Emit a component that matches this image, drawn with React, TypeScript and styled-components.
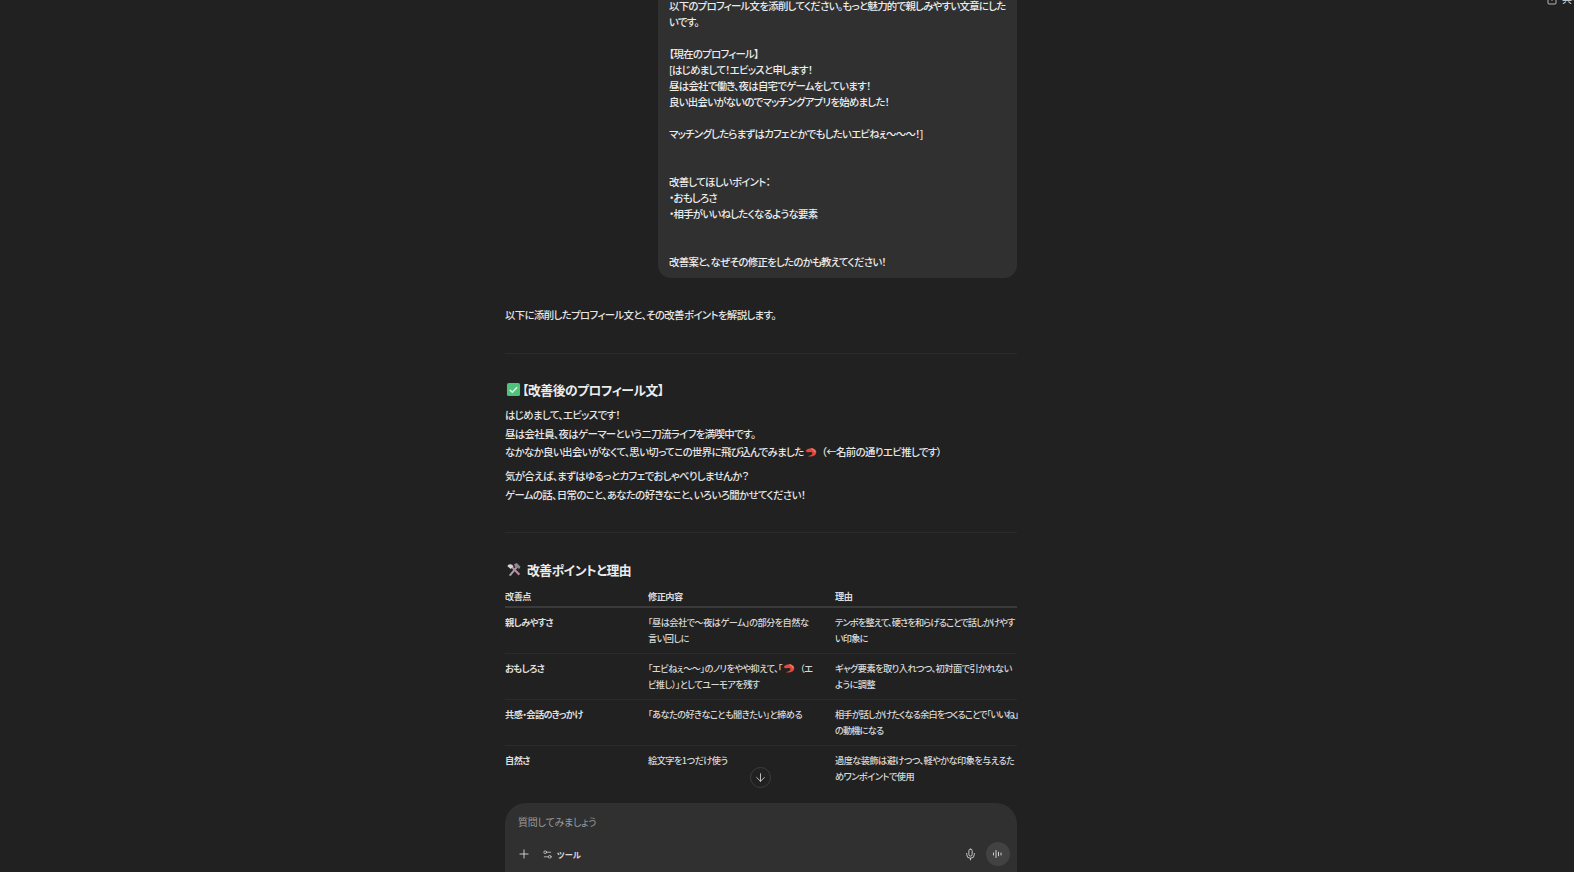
import * as React from 'react';
import styled, { createGlobalStyle } from 'styled-components';
import { ArrowDown, Mic, Plus, Settings2, Share } from 'lucide-react';

const fontStack = '"Noto Sans CJK JP", "Noto Sans", sans-serif';

const bubbleLines = [
  '以下のプロフィール文を添削してください。もっと魅力的で親しみやすい文章にした',
  'いです。',
  '',
  '【現在のプロフィール】',
  '[はじめまして！エビッスと申します！',
  '昼は会社で働き、夜は自宅でゲームをしています！',
  '良い出会いがないのでマッチングアプリを始めました！',
  '',
  'マッチングしたらまずはカフェとかでもしたいエビねぇ〜〜〜！]',
  '',
  '',
  '改善してほしいポイント：',
  '・おもしろさ',
  '・相手がいいねしたくなるような要素',
  '',
  '',
  '改善案と、なぜその修正をしたのかも教えてください！',
];

const Shrimp = () => (
  <ShrimpSvg viewBox="0 0 16 16">
    <path d="M1 6.500C3 2.500 10 1.800 13.500 4.500c2.500 2 2 6.500-1.200 8.300-2.500 1.400-6 1.500-8.300.7 2-1 5-1.200 5.800-3.200C10.500 8.500 8 7.800 5.500 8.300 3.700 8.600 2 8 1 6.500z" fill="#e2483d" />
    <path d="M8.500 3.800c2.800.2 4.800 2 4.800 4.600" fill="none" stroke="#f59a7c" strokeWidth="1.200" />
  </ShrimpSvg>
);

const CheckEmoji = () => (
  <EmojiSvg viewBox="0 0 16 16">
    <rect x="1" y="1" width="14" height="14" rx="2" fill="#4fc27c" />
    <path d="M4 8.200l2.700 2.700L12 5.600" fill="none" stroke="#dff5e6" strokeWidth="1.600" />
  </EmojiSvg>
);

const ToolsEmoji = () => (
  <EmojiSvg viewBox="0 0 16 16">
    <path d="M3 14L10.500 5l1.500 1.500L5 15z" fill="#a9a4ad" />
    <path d="M8.500 2.500l3-1.500 4 4-1.500 2.500-2-1.500-2 .5z" fill="#8d8791" />
    <path d="M13.500 14.500L5.500 6 7 4.500l8 8z" fill="#b98aa2" />
    <path d="M1.500 4.500C2 2.500 4.500 1.500 6.500 3L8 4.500 5 7.500 3.500 6z" fill="#d5d2d8" />
  </EmojiSvg>
);

const VoiceBars = () => (
  <svg width="12" height="12" viewBox="0 0 12 12" fill="none" stroke="currentColor" strokeWidth="1" strokeLinecap="round">
    <path d="M1.500 5v2M4 2.500v7M6.500 4.200v3.600M9 5v2" />
  </svg>
);

export default function App() {
  return (
    <Page>
      <GlobalStyle />
      <ShareAction>
        <Share size={12} strokeWidth={1.6} />
        <span>共有</span>
      </ShareAction>
      <Scroller>
        <Thread>
          <UserBubble>
            {bubbleLines.map((line, i) => (
              <BubbleLine key={i}>{line}</BubbleLine>
            ))}
          </UserBubble>
          <Intro>以下に添削したプロフィール文と、その改善ポイントを解説します。</Intro>
          <Rule />
          <Heading>
            <CheckEmoji />
            <BracketTitle>【改善後のプロフィール文】</BracketTitle>
          </Heading>
          <Paragraph>
            はじめまして、エビッスです！
            <br />
            昼は会社員、夜はゲーマーという二刀流ライフを満喫中です。
            <br />
            なかなか良い出会いがなくて、思い切ってこの世界に飛び込んでみました
            <Shrimp />
            （←名前の通りエビ推しです）
          </Paragraph>
          <Paragraph>
            気が合えば、まずはゆるっとカフェでおしゃべりしませんか？
            <br />
            ゲームの話、日常のこと、あなたの好きなこと、いろいろ聞かせてください！
          </Paragraph>
          <Rule $second />
          <Heading $second>
            <ToolsEmoji />
            <PlainTitle>改善ポイントと理由</PlainTitle>
          </Heading>
          <PointsTable>
            <colgroup>
              <FirstCol />
              <SecondCol />
              <col />
            </colgroup>
            <thead>
              <tr>
                <HeadCell>改善点</HeadCell>
                <HeadCell>修正内容</HeadCell>
                <HeadCell>理由</HeadCell>
              </tr>
            </thead>
            <tbody>
              <Row>
                <LabelCell>親しみやすさ</LabelCell>
                <BodyCell>「昼は会社で〜夜はゲーム」の部分を自然な<br />言い回しに</BodyCell>
                <BodyCell $tight>テンポを整えて、硬さを和らげることで話しかけやす<br />い印象に</BodyCell>
              </Row>
              <Row>
                <LabelCell>おもしろさ</LabelCell>
                <BodyCell>「エビねぇ〜〜」のノリをやや抑えて、「<Shrimp />（エ<br />ビ推し）」としてユーモアを残す</BodyCell>
                <BodyCell>ギャグ要素を取り入れつつ、初対面で引かれない<br />ように調整</BodyCell>
              </Row>
              <Row>
                <LabelCell>共感・会話のきっかけ</LabelCell>
                <BodyCell>「あなたの好きなことも聞きたい」と締める<br />&nbsp;</BodyCell>
                <BodyCell $tight>相手が話しかけたくなる余白をつくることで「いいね」<br />の動機になる</BodyCell>
              </Row>
              <Row>
                <LabelCell>自然さ</LabelCell>
                <BodyCell>絵文字を1つだけ使う</BodyCell>
                <BodyCell>過度な装飾は避けつつ、軽やかな印象を与えるた<br />めワンポイントで使用</BodyCell>
              </Row>
            </tbody>
          </PointsTable>
        </Thread>
        <ScrollDown aria-label="下へ移動">
          <ArrowDown size={13} strokeWidth={1.6} />
        </ScrollDown>
      </Scroller>
      <Composer>
        <Placeholder>質問してみましょう</Placeholder>
        <ComposerBar>
          <IconSlot>
            <Plus size={14} strokeWidth={1.5} />
          </IconSlot>
          <ToolButton>
            <Settings2 size={11} strokeWidth={1.6} />
            ツール
          </ToolButton>
          <Spacer />
          <IconSlot>
            <Mic size={13} strokeWidth={1.6} />
          </IconSlot>
          <VoiceButton>
            <VoiceBars />
          </VoiceButton>
        </ComposerBar>
      </Composer>
    </Page>
  );
}

const GlobalStyle = createGlobalStyle`
  html, body {
    margin: 0;
    height: 100%;
    overflow: hidden;
    background: #212121;
  }
`;

const Page = styled.div`
  position: relative;
  display: flex;
  flex-direction: column;
  align-items: center;
  height: 872px;
  padding-right: 52px;
  box-sizing: border-box;
  overflow: hidden;
  color: #e6e6e6;
  font-family: ${fontStack};
  font-feature-settings: "palt";
`;

const ShareAction = styled.div`
  position: absolute;
  top: -8px;
  left: 1546px;
  display: flex;
  align-items: center;
  gap: 4px;
  font-size: 10px;
  line-height: 14px;
  color: #dddddd;
  white-space: nowrap;
`;

const Scroller = styled.main`
  position: relative;
  flex: none;
  width: 520px;
  height: 803px;
  margin-right: -8px;
  overflow: hidden;
`;

const Thread = styled.div`
  width: 512px;
  margin-top: -2px;
  font-size: 10.4px;
  font-weight: 500;
  letter-spacing: -0.6px;
`;

const UserBubble = styled.div`
  box-sizing: border-box;
  width: 359px;
  margin-left: 153px;
  padding: 0 11px 8px;
  background: #303030;
  border-radius: 0 0 13px 13px;
  color: #ececec;
  letter-spacing: -0.7px;
`;

const BubbleLine = styled.div`
  height: 16px;
  line-height: 16px;
  white-space: nowrap;
`;

const Intro = styled.p`
  margin: 29px 0 0;
  line-height: 16px;
`;

const Rule = styled.hr<{ $second?: boolean }>`
  height: 1px;
  margin: ${({ $second }) => ($second ? '27px 0 0' : '30px 0 0')};
  border: 0;
  background: #2b2b2b;
`;

const Heading = styled.h2<{ $second?: boolean }>`
  display: flex;
  align-items: center;
  height: 20px;
  margin: ${({ $second }) => ($second ? '27px 0 0' : '25px 0 7px')};
  font-size: 12.8px;
  font-weight: 700;
  letter-spacing: -0.45px;
  color: #ececec;
`;

const EmojiSvg = styled.svg`
  flex: none;
  width: 15px;
  height: 15px;
  margin-left: 1px;
`;

const BracketTitle = styled.span`
  margin-left: 1px;
`;

const PlainTitle = styled.span`
  margin-left: 6px;
`;

const ShrimpSvg = styled.svg`
  width: 12px;
  height: 12px;
  margin: 0 5px 0 1px;
  vertical-align: -2px;
`;

const Paragraph = styled.p`
  margin: 5px 0 0;
  line-height: 18.7px;
  white-space: nowrap;
`;

const PointsTable = styled.table`
  width: 512px;
  margin-top: 8px;
  border-collapse: collapse;
  table-layout: fixed;
  font-size: 9.2px;
  letter-spacing: -0.55px;
`;

const FirstCol = styled.col`
  width: 143px;
`;

const SecondCol = styled.col`
  width: 187px;
`;

const HeadCell = styled.th`
  height: 16px;
  padding: 0 0 2px;
  border-bottom: 2px solid #3a3a3a;
  font-weight: 700;
  text-align: left;
  line-height: 14px;
  color: #dcdcdc;
`;

const Row = styled.tr`
  &:last-child td {
    border-bottom: 0;
  }
`;

const BodyCell = styled.td<{ $tight?: boolean }>`
  height: 45.3px;
  box-sizing: border-box;
  padding: 6px 0 7px;
  border-bottom: 1px solid #2b2b2b;
  vertical-align: top;
  line-height: 16px;
  white-space: nowrap;
  font-weight: 500;
  letter-spacing: ${({ $tight }) => ($tight ? '-0.85px' : 'inherit')};
  color: #d8d8d8;
`;

const LabelCell = styled(BodyCell)`
  font-weight: 700;
  color: #dedede;
`;

const ScrollDown = styled.button`
  position: absolute;
  left: 245px;
  top: 767px;
  display: flex;
  align-items: center;
  justify-content: center;
  width: 21px;
  height: 21px;
  padding: 0;
  border: 1px solid #3d3d3d;
  border-radius: 50%;
  background: #212121;
  color: #d8d8d8;
`;

const Composer = styled.section`
  flex: none;
  box-sizing: border-box;
  width: 512px;
  height: 90px;
  padding: 11px 8px 0 11px;
  border-radius: 21px 21px 0 0;
  background: #303030;
`;

const Placeholder = styled.div`
  margin-left: 2px;
  font-size: 10px;
  letter-spacing: -0.2px;
  line-height: 16px;
  color: #9b9b9b;
`;

const ComposerBar = styled.div`
  display: flex;
  align-items: center;
  height: 24px;
  margin-top: 12px;
`;

const IconSlot = styled.span`
  display: flex;
  align-items: center;
  justify-content: center;
  width: 16px;
  color: #dcdcdc;
`;

const ToolButton = styled.span`
  display: flex;
  align-items: center;
  gap: 4px;
  margin-left: 10px;
  font-size: 8.2px;
  font-weight: 700;
  color: #d8d8d8;
`;

const Spacer = styled.div`
  flex: 1;
`;

const VoiceButton = styled.span`
  display: flex;
  align-items: center;
  justify-content: center;
  width: 24px;
  height: 24px;
  margin-left: 8px;
  margin-right: -1px;
  border-radius: 50%;
  background: #424242;
  color: #cfcfcf;
`;
